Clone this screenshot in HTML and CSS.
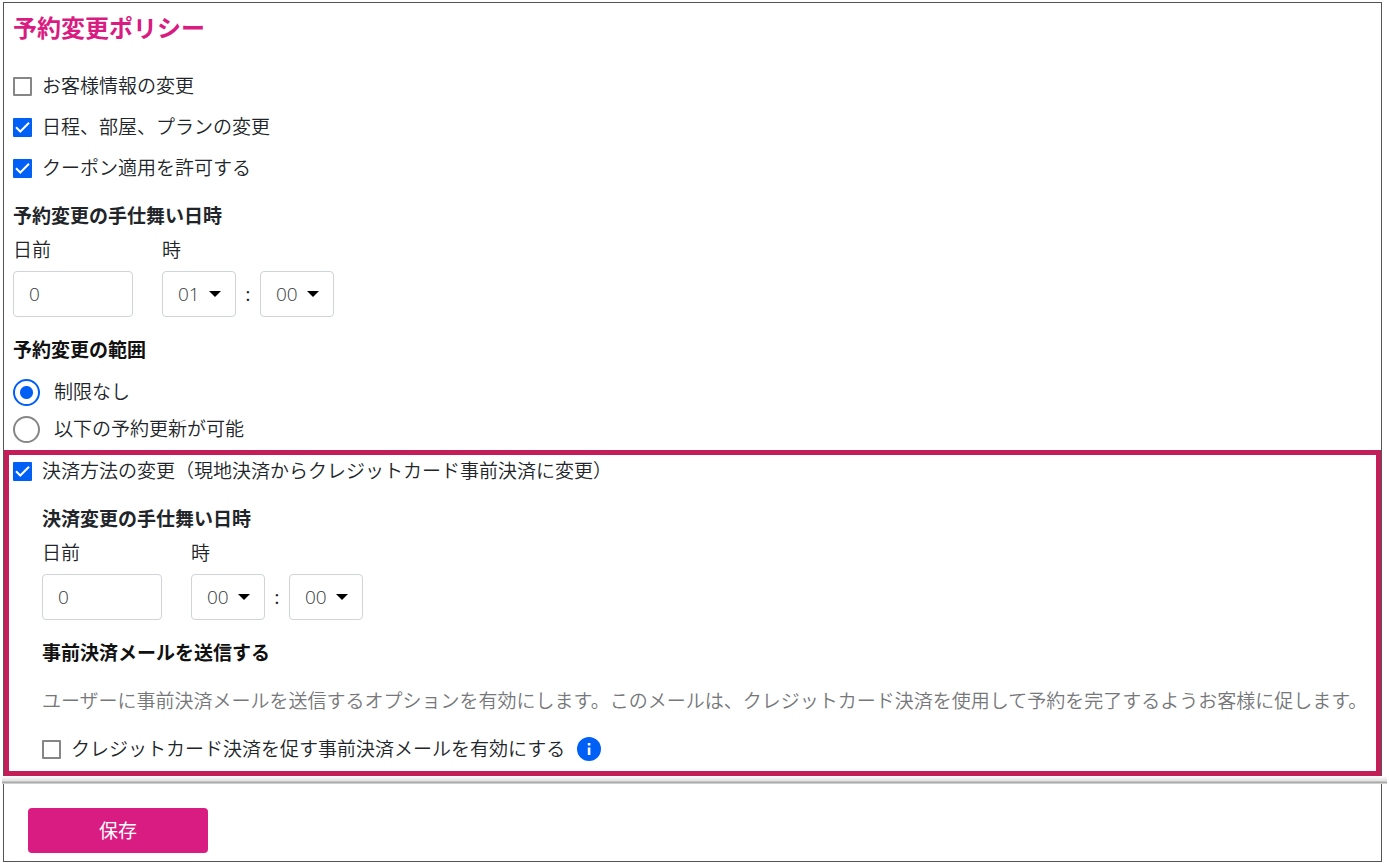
FILE: index.html
```html
<!DOCTYPE html>
<html lang="ja">
<head>
<meta charset="utf-8">
<title>予約変更ポリシー</title>
<link rel="stylesheet" href="styles.css">
</head>
<body>
<form class="panel">
  <div class="section">
    <h1 class="title">予約変更ポリシー</h1>
    <div class="checks">
      <label class="choice"><input class="check" type="checkbox"><span>お客様情報の変更</span></label>
      <label class="choice"><input class="check" type="checkbox" checked><span>日程、部屋、プランの変更</span></label>
      <label class="choice"><input class="check" type="checkbox" checked><span>クーポン適用を許可する</span></label>
    </div>
    <h2 class="heading">予約変更の手仕舞い日時</h2>
    <div class="cutoff">
      <div class="field">
        <label for="change-days">日前</label>
        <input class="control days" id="change-days" type="text" value="0">
      </div>
      <div class="field">
        <label for="change-hour">時</label>
        <div class="time">
          <select class="control select" id="change-hour"><option>00</option><option selected>01</option></select>
          <span class="colon">:</span>
          <select class="control select" aria-label="分"><option>00</option><option>30</option></select>
        </div>
      </div>
    </div>
    <h2 class="heading strong">予約変更の範囲</h2>
    <div class="radios">
      <label class="choice radio-choice"><input class="radio" type="radio" name="scope" checked><span>制限なし</span></label>
      <label class="choice radio-choice"><input class="radio" type="radio" name="scope"><span>以下の予約更新が可能</span></label>
    </div>
  </div>

  <div class="highlight">
    <label class="choice"><input class="check" type="checkbox" checked><span>決済方法の変更（現地決済からクレジットカード事前決済に変更）</span></label>
    <div class="nested">
      <h2 class="heading">決済変更の手仕舞い日時</h2>
      <div class="cutoff">
        <div class="field">
          <label for="pay-days">日前</label>
          <input class="control days" id="pay-days" type="text" value="0">
        </div>
        <div class="field">
          <label for="pay-hour">時</label>
          <div class="time">
            <select class="control select" id="pay-hour"><option>00</option><option>01</option></select>
            <span class="colon">:</span>
            <select class="control select" aria-label="分"><option>00</option><option>30</option></select>
          </div>
        </div>
      </div>
      <h2 class="heading strong">事前決済メールを送信する</h2>
      <p class="note">ユーザーに事前決済メールを送信するオプションを有効にします。このメールは、クレジットカード決済を使用して予約を完了するようお客様に促します。</p>
      <div class="mail">
        <label class="choice"><input class="check" type="checkbox"><span>クレジットカード決済を促す事前決済メールを有効にする</span></label>
        <svg class="info" viewBox="0 0 24 24" role="img" aria-label="情報"><circle cx="12" cy="12" r="12" fill="#005ff5"/><path d="M10.8 6h2.6v2.4h-2.6zM10.8 10.4h2.6V18h-2.6z" fill="#fff"/></svg>
      </div>
    </div>
  </div>

  <div class="footer">
    <button class="save" type="button">保存</button>
  </div>
</form>
</body>
</html>
```
FILE: styles.css
```css
* {
  box-sizing: border-box;
}

body {
  margin: 0;
  padding: 2px 7px 1px 3px;
  background: #fff;
  color: #212529;
  font-family: Lato, "Noto Sans CJK JP", sans-serif;
  font-size: 19px;
  font-weight: 350;
  line-height: 28px;
}

.panel {
  border: 1px solid #545454;
}

.section {
  padding: 11px 9px 7px;
}

.title {
  margin: 0 0 30px;
  color: #d91c81;
  font-size: 24px;
  font-weight: 700;
  line-height: 28px;
}

.checks {
  display: flex;
  flex-direction: column;
  align-items: flex-start;
  gap: 13px;
}

.choice {
  display: flex;
  align-items: center;
  gap: 10px;
}

.check {
  flex: none;
  appearance: none;
  width: 19px;
  height: 19px;
  margin: 0;
  border: 2px solid #868686;
  border-radius: 1px;
  background: #fff;
}

.check:checked {
  border: 0;
  background: #005ff5 url("data:image/svg+xml,%3Csvg xmlns='http://www.w3.org/2000/svg' viewBox='0 0 19 19'%3E%3Cpath d='M3 9.3l4.3 4.2L16 4.8' fill='none' stroke='%23fff' stroke-width='2'/%3E%3C/svg%3E") center / 19px 19px no-repeat;
}

.heading {
  margin: 20px 0 0;
  font-size: 19px;
  font-weight: 700;
  line-height: 28px;
}

.strong {
  margin-top: 19px;
  color: #111;
}

.cutoff {
  display: flex;
  gap: 29px;
  margin-top: 6px;
}

.field {
  display: flex;
  flex-direction: column;
  gap: 7px;
}

.time {
  display: flex;
  align-items: center;
}

.colon {
  width: 24px;
  font-weight: 400;
  text-align: center;
}

.control {
  height: 46px;
  margin: 0;
  padding: 0 15px;
  border: 1px solid #ced4da;
  border-radius: 4px;
  background: #fff;
  color: #343a40;
  font-family: "Open Sans", "Noto Sans", sans-serif;
  font-size: 19px;
  font-weight: 350;
}

.days {
  width: 120px;
}

.select {
  appearance: none;
  width: 74px;
  padding: 0 15px;
  background: #fff url("data:image/svg+xml,%3Csvg xmlns='http://www.w3.org/2000/svg' viewBox='0 0 12 6'%3E%3Cpath d='M0 0h12L6 6z' fill='%23000'/%3E%3C/svg%3E") right 14px center / 12px 6px no-repeat;
}

.radios {
  display: flex;
  flex-direction: column;
  align-items: flex-start;
  gap: 9px;
  margin-top: 14px;
}

.radio-choice {
  gap: 14px;
}

.radio {
  flex: none;
  appearance: none;
  width: 27px;
  height: 27px;
  margin: 0;
  border: 2px solid #868686;
  border-radius: 50%;
}

.radio:checked {
  border-color: #005ff5;
  background: radial-gradient(circle, #005ff5 6px, #fff 7px);
}

.highlight {
  padding: 2px 0 8px 4px;
  border: 5px solid #c41e58;
}

.nested {
  padding-left: 29px;
}

.note {
  margin: 20px 0;
  color: #76777a;
}

.mail {
  display: flex;
  align-items: center;
  gap: 12px;
}

.info {
  width: 24px;
  height: 24px;
}

.footer {
  position: relative;
  padding: 32px 24px 8px;
}

.footer::before {
  content: "";
  position: absolute;
  top: 0;
  left: -2px;
  right: -6px;
  height: 8px;
  background: linear-gradient(#fff, #e0e0e0 5px, #aaa 6px, #aaa 7px, #d0d0d0 7px);
}

.save {
  display: block;
  width: 180px;
  height: 45px;
  padding: 0;
  border: 0;
  border-radius: 4px;
  background: #d91c81;
  color: #fff;
  font: inherit;
  font-weight: 400;
}
```
